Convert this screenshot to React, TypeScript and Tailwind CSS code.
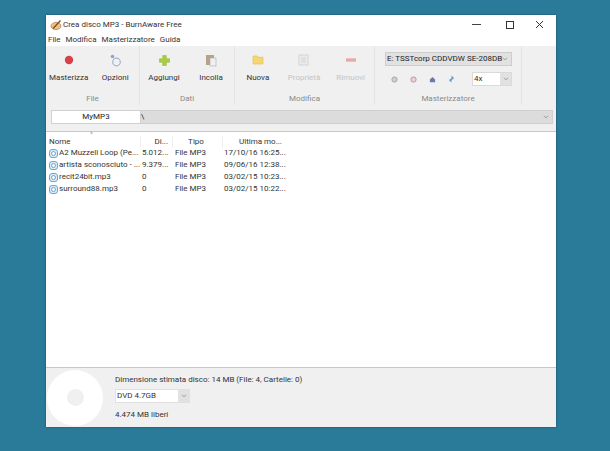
import React from "react";

const font = { fontFamily: 'Roboto, "Noto Sans", sans-serif' };

function Tool({ label, w, dim, children }: { label: string; w: string; dim?: boolean; children: React.ReactNode }) {
  return (
    <div className={`flex flex-col items-center ${w}`}>
      <div className="h-[18px] flex items-center justify-center">{children}</div>
      <div className={`mt-[3px] text-[8px] leading-[12px] whitespace-nowrap ${dim ? "text-[#c4c4c4]" : "text-[#333]"}`}>{label}</div>
    </div>
  );
}

function Group({ label, w, children }: { label: string; w: string; children: React.ReactNode }) {
  return (
    <div className={`${w} h-[59px] border-r border-[#e4e4e4] flex flex-col shrink-0`}>
      <div className="h-[47px] pt-[5px] flex">{children}</div>
      <div className="text-center text-[8px] leading-[12px] text-[#8a8a8a]">{label}</div>
    </div>
  );
}

const Chevron = () => (
  <svg width="6" height="4" viewBox="0 0 7 5" fill="none" stroke="#888" strokeWidth="1"><path d="M1 1l2.5 2.5L6 1" /></svg>
);

const Disc = () => (
  <svg width="9" height="9" viewBox="0 0 9 9" className="shrink-0">
    <rect x="0.5" y="0.5" width="8" height="8" rx="2.5" fill="#dcebf6" stroke="#6aa9d6" />
    <circle cx="4.5" cy="4.5" r="2" fill="#fff" stroke="#4d94c9" strokeWidth="0.8" />
  </svg>
);

const files = [
  ["A2 Muzzell Loop (Pe...", "5.012...", "File MP3", "17/10/16 16:25..."],
  ["artista sconosciuto - ...", "9.379...", "File MP3", "09/06/16 12:38..."],
  ["recit24bit.mp3", "0", "File MP3", "03/02/15 10:23..."],
  ["surround88.mp3", "0", "File MP3", "03/02/15 10:22..."],
];

export default function App() {
  return (
    <div className="w-[610px] h-[451px] bg-[#2a7a9a] pt-[15px] pl-[46px] overflow-hidden" style={font}>
      <div className="w-[510px] h-[412px] bg-white flex flex-col shadow-[0_0_2px_#1b4a5e] text-[#333]">
        <div className="h-[19px] flex items-center pl-[4px] shrink-0">
          <svg width="12" height="12" viewBox="0 0 12 12" className="shrink-0">
            <ellipse cx="6" cy="7" rx="5" ry="3.6" fill="#e8c48a" stroke="#b8763a" strokeWidth="0.7" />
            <path d="M3 9.5L10.5 1.5" stroke="#8a4b20" strokeWidth="1.4" />
          </svg>
          <span className="ml-[1px] text-[8px] text-[#333] whitespace-nowrap">Crea disco MP3 - BurnAware Free</span>
          <div className="ml-auto flex items-center">
            <div className="w-[9px] h-[1px] bg-[#444] mr-[25px]" />
            <div className="w-[8px] h-[8px] border border-[#333] mr-[21px]" />
            <svg width="9" height="9" viewBox="0 0 9 9" className="mr-[12px]" stroke="#333" strokeWidth="1"><path d="M1 1l7 7M8 1L1 8" /></svg>
          </div>
        </div>
        <div className="h-[12px] flex items-center gap-[5px] pl-[2px] text-[8px] leading-[12px] text-[#333] shrink-0">
          <span>File</span><span>Modifica</span><span>Masterizzatore</span><span>Guida</span>
        </div>
        <div className="h-[85px] bg-[#f0f0f0] shrink-0 flex flex-col">
          <div className="flex h-[59px]">
            <Group label="File" w="w-[94px]">
              <Tool label="Masterizza" w="w-[46px]">
                <svg width="10" height="10" viewBox="0 0 10 10"><circle cx="5" cy="5" r="4.2" fill="#d8404a" /></svg>
              </Tool>
              <Tool label="Opzioni" w="w-[48px]">
                <svg width="13" height="13" viewBox="0 0 13 13"><circle cx="7.5" cy="8" r="3.8" fill="#eef1f6" stroke="#a8b2c2" strokeWidth="1.2" /><circle cx="3.5" cy="2.5" r="1.8" fill="#8ba6ca" /></svg>
              </Tool>
            </Group>
            <Group label="Dati" w="w-[95px]">
              <Tool label="Aggiungi" w="w-[48px]">
                <svg width="11" height="11" viewBox="0 0 12 12"><path d="M4 0.5h4v3.5h3.5v4H8v3.5H4V8H0.5V4H4z" fill="#a6ce3f" stroke="#8bb02e" strokeWidth="0.5" /></svg>
              </Tool>
              <Tool label="Incolla" w="w-[46px]">
                <svg width="12" height="13" viewBox="0 0 12 13"><rect x="1" y="1" width="8" height="10" fill="#b8a284" /><rect x="5" y="4" width="6" height="8" fill="#eef0f3" stroke="#a8adb5" strokeWidth="0.6" /></svg>
              </Tool>
            </Group>
            <Group label="Modifica" w="w-[140px]">
              <Tool label="Nuova" w="w-[46px]">
                <svg width="12" height="10" viewBox="0 0 12 11"><path d="M0.5 2V10h11V2.5H6L5 1H1z" fill="#f5d76e" stroke="#e0b94a" strokeWidth="0.6" /></svg>
              </Tool>
              <Tool label="Proprietà" w="w-[47px]" dim>
                <svg width="12" height="12" viewBox="0 0 12 12"><rect x="1" y="1" width="9" height="10" fill="#ececec" stroke="#d4d4d4" /><path d="M3 4h5M3 6h5M3 8h5" stroke="#d4d4d4" /></svg>
              </Tool>
              <Tool label="Rimuovi" w="w-[47px]" dim>
                <svg width="10" height="4" viewBox="0 0 12 4"><rect width="12" height="4" fill="#e3aaa6" /></svg>
              </Tool>
            </Group>
            <Group label="Masterizzatore" w="w-[147px]">
              <div className="flex flex-col pl-[10px] mt-[1px]">
                <div className="w-[127px] h-[14px] bg-[#e1e1e1] border border-[#cdcdcd] flex items-center pl-[1px] text-[8px] leading-[12px] text-[#222] whitespace-nowrap">
                  E: TSSTcorp CDDVDW SE-208DB
                  <span className="ml-auto mr-[3px]"><Chevron /></span>
                </div>
                <div className="flex items-center mt-[6px]">
                  <div className="flex items-center gap-[12px] pl-[6px] w-[87px]">
                    <svg width="7" height="7" viewBox="0 0 8 8"><circle cx="4" cy="4" r="3" fill="#c9d0d6" stroke="#9aa4ac" /></svg>
                    <svg width="7" height="7" viewBox="0 0 8 8"><circle cx="4" cy="4" r="3" fill="#ecd0d5" stroke="#c08a94" /></svg>
                    <svg width="7" height="7" viewBox="0 0 8 8"><path d="M4 1l3 3v3H1V4z" fill="#6a7aab" /></svg>
                    <svg width="7" height="8" viewBox="0 0 8 8"><path d="M4 0l3 3-3 2zM4 8L1 5l3-2z" fill="#6396c8" /></svg>
                  </div>
                  <div className="w-[40px] h-[14px] bg-white border border-[#dadada] flex items-center pl-[1px] text-[8px] leading-[12px]">
                    4x
                    <div className="ml-auto w-[11px] h-full bg-[#e1e1e1] flex items-center justify-center"><Chevron /></div>
                  </div>
                </div>
              </div>
            </Group>
          </div>
          <div className="mt-[5px] ml-[5px] mr-[3px] h-[14px] flex items-center">
            <div className="w-[90px] h-full bg-white border border-[#d0d0d0] text-center text-[8px] leading-[12px] text-[#222]">MyMP3</div>
            <div className="flex-1 h-full bg-[#dcdcdc] border border-[#d0d0d0] border-l-0 flex items-center text-[8px] leading-[12px] text-[#222]">
              \
              <span className="ml-auto mr-[3px]"><Chevron /></span>
            </div>
          </div>
        </div>
        <div className="flex-1 min-h-0 bg-white border-t border-[#c8c8c8] relative text-[8px] leading-[12px]">
          <div className="absolute left-[44px] top-0 text-[7px] leading-[6px] text-[#999]">^</div>
          <div className="flex h-[14px] items-center pt-[3px] mt-[1px] text-[#333]">
            <div className="w-[95px] pl-[3px] border-r border-[#eee]">Nome</div>
            <div className="w-[32px] text-right pr-[4px] border-r border-[#eee]">Di...</div>
            <div className="w-[50px] text-center pr-[3px] border-r border-[#eee]">Tipo</div>
            <div className="w-[62px] pl-[16px] whitespace-nowrap">Ultima mo...</div>
          </div>
          <div className="flex flex-col">
            {files.map((f) => (
              <div key={f[0]} className="flex h-[12px] items-center">
                <div className="w-[96px] pl-[3px] flex items-center gap-[1px] whitespace-nowrap overflow-hidden"><Disc />{f[0]}</div>
                <div className="w-[33px]">{f[1]}</div>
                <div className="w-[49px]">{f[2]}</div>
                <div className="whitespace-nowrap">{f[3]}</div>
              </div>
            ))}
          </div>
        </div>
        <div className="h-[60px] bg-[#f0f0f0] border-t border-[#c8c8c8] shrink-0 flex items-center pl-[1px]">
          <div className="w-[56px] h-[56px] rounded-full bg-white flex items-center justify-center shrink-0">
            <div className="w-[17px] h-[17px] rounded-full bg-[#f0f0f0]" />
          </div>
          <div className="ml-[12px] flex flex-col text-[8px] leading-[12px] text-[#333]">
            <div>Dimensione stimata disco: 14 MB (File: 4, Cartelle: 0)</div>
            <div className="mt-[3px] w-[75px] h-[14px] bg-white border border-[#e0e0e0] flex items-center pl-[1px]">
              DVD 4.7GB
              <div className="ml-auto w-[11px] h-full bg-[#e1e1e1] flex items-center justify-center"><Chevron /></div>
            </div>
            <div className="mt-[6px]">4.474 MB liberi</div>
          </div>
        </div>
      </div>
    </div>
  );
}
